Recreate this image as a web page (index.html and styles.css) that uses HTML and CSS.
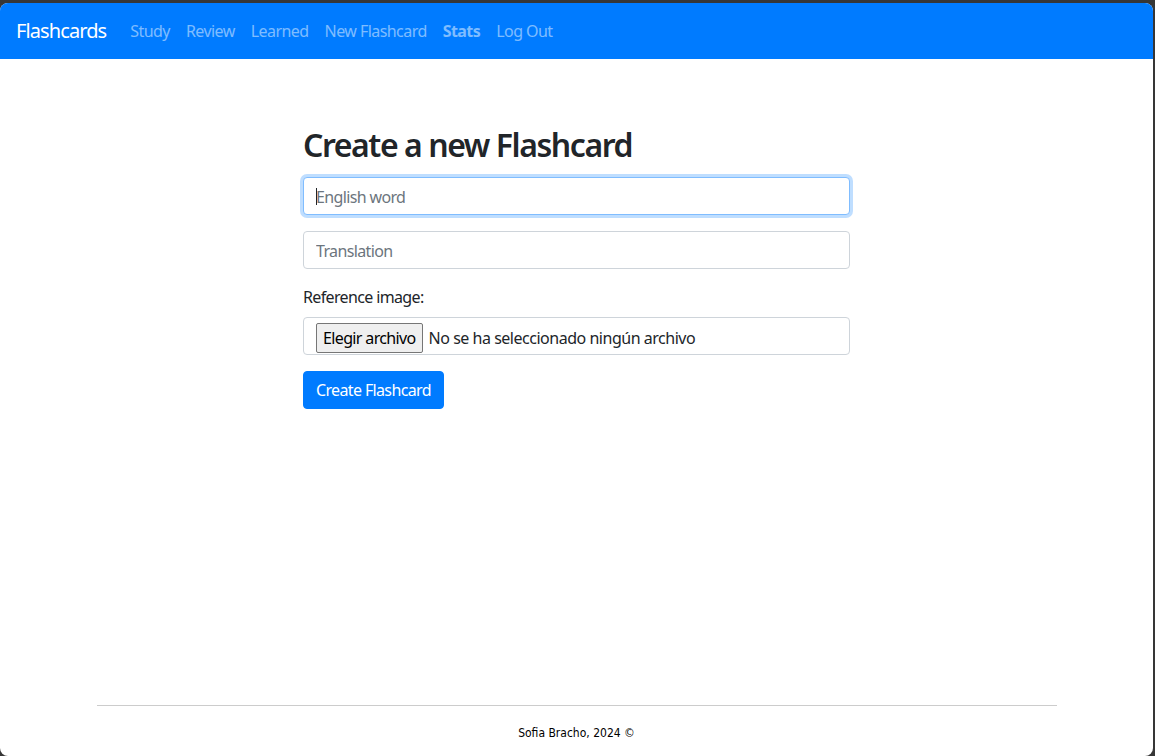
FILE: index.html
```html
<!DOCTYPE html>
<html lang="en">
<head>
<meta charset="utf-8">
<title>Flashcards</title>
<link rel="stylesheet" href="styles.css">
</head>
<body>
<div class="window">
  <nav class="navbar">
    <a class="brand" href="#">Flashcards</a>
    <ul class="nav">
      <li><a class="nav-link" href="#">Study</a></li>
      <li><a class="nav-link" href="#">Review</a></li>
      <li><a class="nav-link" href="#">Learned</a></li>
      <li><a class="nav-link" href="#">New Flashcard</a></li>
      <li><a class="nav-link bold" href="#">Stats</a></li>
      <li><a class="nav-link" href="#">Log Out</a></li>
    </ul>
  </nav>
  <main class="main">
    <form class="form">
      <h2 class="title">Create a new Flashcard</h2>
      <div class="group caret-wrap">
        <input class="control focused" type="text" placeholder="English word">
        <span class="caret"></span>
      </div>
      <div class="group">
        <input class="control" type="text" placeholder="Translation">
      </div>
      <div class="group">
        <label class="label">Reference image:</label>
        <div class="control file">
          <span class="file-btn">Elegir archivo</span>
          <span class="file-text">No se ha seleccionado ningún archivo</span>
        </div>
      </div>
      <button class="btn" type="button">Create Flashcard</button>
    </form>
  </main>
  <footer class="footer">
    <hr class="rule">
    <p class="copy">Sofia Bracho, 2024 ©</p>
  </footer>
</div>
</body>
</html>
```

FILE: styles.css
```css
* { box-sizing: border-box; }
html, body { margin: 0; padding: 0; }
body {
  background: #363636;
  font-family: "Noto Sans", "Open Sans", sans-serif;
  letter-spacing: -0.04em;
  color: #212529;
  font-size: 16px;
  line-height: 1.5;
}
.window {
  margin: 3px 2px 0 0;
  height: 753px;
  background: #fff;
  border-radius: 8px;
  overflow: hidden;
  display: flex;
  flex-direction: column;
}
.navbar {
  background: #007bff;
  height: 56px;
  display: flex;
  align-items: center;
  padding: 0 16px;
  flex-shrink: 0;
}
.brand {
  color: #fff;
  font-size: 20px;
  letter-spacing: -0.045em;
  text-decoration: none;
  margin-right: 16px;
  line-height: 30px;
}
.nav {
  list-style: none;
  display: flex;
  margin: 0;
  padding: 0;
}
.nav-link {
  display: block;
  padding: 8px;
  color: rgba(255,255,255,.5);
  text-decoration: none;
  letter-spacing: -0.035em;
}
.nav-link.bold { font-weight: 700; }
.main {
  flex: 1;
  display: flex;
  justify-content: center;
  padding-top: 67px;
}
.form {
  width: 547px;
}
.title {
  font-size: 32px;
  font-weight: 600;
  letter-spacing: -0.045em;
  line-height: 1.2;
  margin: 0 0 13px;
}
.group {
  margin-bottom: 16px;
}
.caret-wrap { position: relative; }
.caret {
  position: absolute;
  left: 13px;
  top: 11px;
  width: 1px;
  height: 17px;
  background: #212529;
}
.control {
  display: block;
  width: 100%;
  height: 38px;
  padding: 7px 12px 5px;
  font: inherit;
  font-size: 16px;
  letter-spacing: -0.04em;
  color: #495057;
  background: #fff;
  border: 1px solid #ced4da;
  border-radius: 4px;
  outline: none;
}
.control::placeholder { color: #6c757d; }
.control.focused {
  border-color: #80bdff;
  box-shadow: 0 0 0 3px rgba(0,123,255,.25);
}
.label {
  display: inline-block;
  margin-bottom: 8px;
  font-size: 16px;
}
.file {
  display: flex;
  align-items: center;
  padding: 0 12px;
  color: #212529;
}
.file-btn {
  display: inline-block;
  border: 1px solid #767676;
  background: #efefef;
  border-radius: 2px;
  padding: 0 6px;
  height: 30px;
  line-height: 28px;
  margin: 4px 6px 0 0;
  color: #000;
}
.file-text { color: #212529; margin-top: 4px; letter-spacing: -0.03em; }
.btn {
  font: inherit;
  font-size: 16px;
  letter-spacing: -0.04em;
  color: #fff;
  background: #007bff;
  border: 1px solid #007bff;
  border-radius: 4px;
  padding: 6px 12px;
  line-height: 24px;
  cursor: pointer;
}
.footer {
  width: 960px;
  margin: 0 auto;
  flex-shrink: 0;
  text-align: center;
}
.rule {
  border: 0;
  border-top: 1px solid rgba(0,0,0,.2);
  margin: 0 0 18px;
}
.copy {
  margin: 0 0 14px;
  font-family: "DejaVu Sans Condensed", "DejaVu Sans", sans-serif;
  letter-spacing: 0;
  font-size: 12px;
  line-height: 18px;
  color: #000;
}
```
